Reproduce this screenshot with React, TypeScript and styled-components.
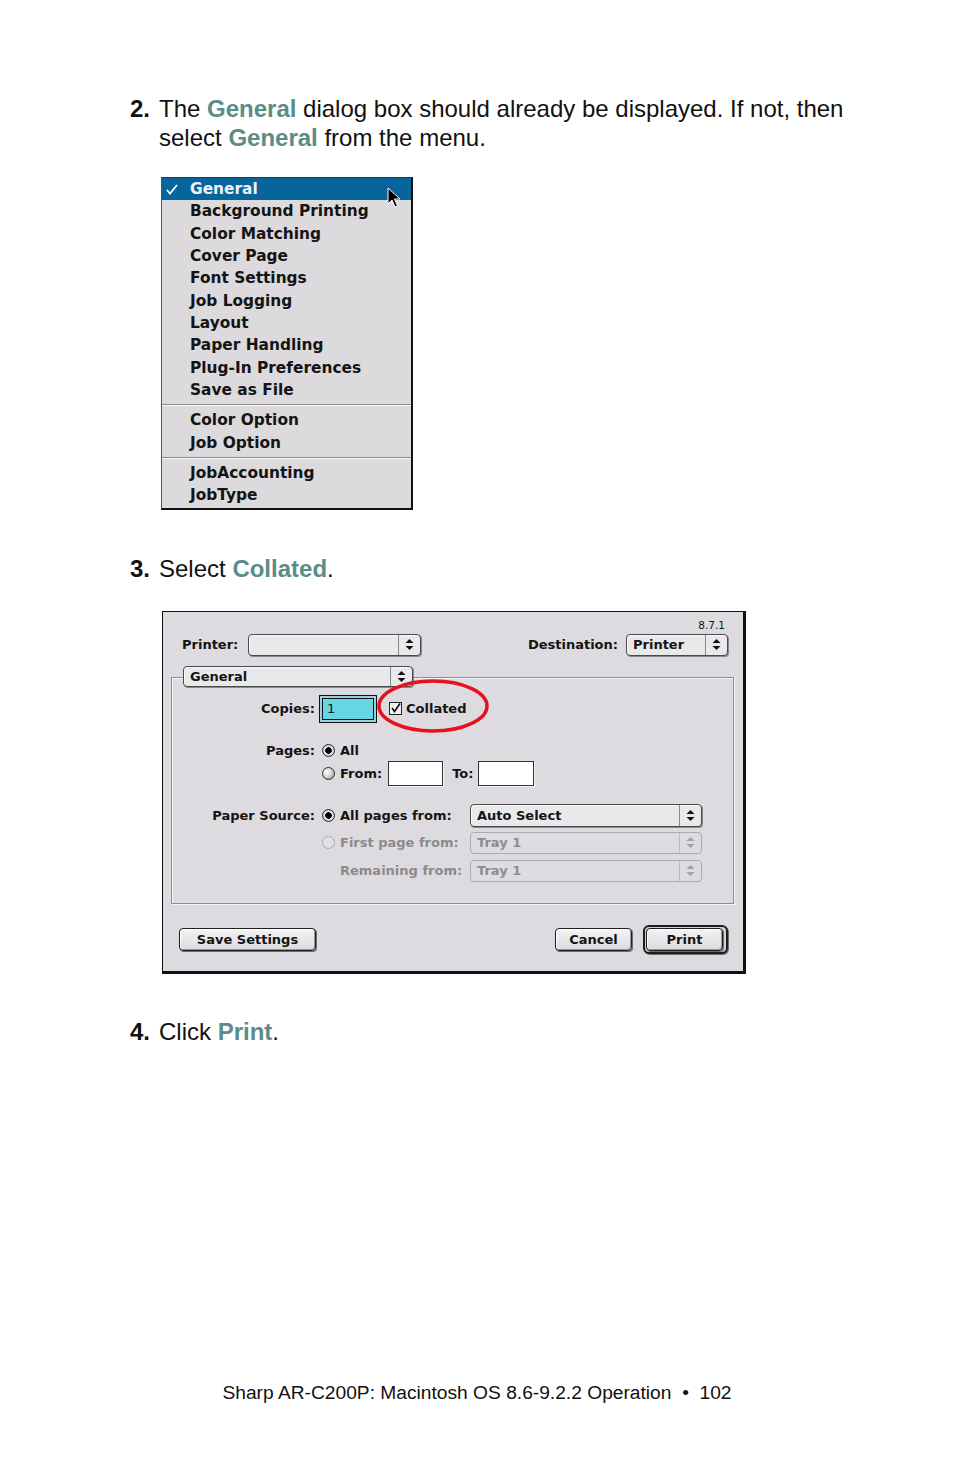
import React from "react";
import styled, { createGlobalStyle } from "styled-components";

const GlobalStyle = createGlobalStyle`
  html, body { margin: 0; padding: 0; background: #ffffff; }
  body { font-family: "Liberation Sans", Arial, sans-serif; color: #000; }
  * { box-sizing: border-box; }
`;

const Page = styled.div`
  width: 954px;
  min-height: 1475px;
  display: flex;
  flex-direction: column;
  padding-top: 94px;
`;

const Step = styled.div<{ $mt?: number }>`
  display: flex;
  margin-left: 130px;
  margin-top: ${(p) => p.$mt ?? 0}px;
  font-size: 24px;
  line-height: 29px;
  color: #111;
`;

const StepNum = styled.span`
  width: 29px;
  flex: none;
  font-weight: bold;
`;

const StepText = styled.span`
  white-space: nowrap;
`;

const Hl = styled.span`
  color: #5b8c88;
  font-weight: bold;
`;

/* ---------- popup menu ---------- */
const Menu = styled.div`
  position: relative;
  width: 252px;
  margin-left: 161px;
  margin-top: 25px;
  background: #dcdadd;
  border-top: 1px solid #333;
  border-left: 1px solid #555;
  border-right: 2px solid #111;
  border-bottom: 2px solid #111;
  padding-bottom: 1px;
  font-family: "DejaVu Sans", Verdana, sans-serif;
  font-weight: bold;
  font-size: 15.4px;
`;

const MenuItem = styled.div<{ $active?: boolean }>`
  position: relative;
  height: 22.33px;
  display: flex;
  align-items: center;
  padding-left: 28px;
  background: ${(p) => (p.$active ? "#08659b" : "transparent")};
  color: ${(p) => (p.$active ? "#eef3f8" : "#141414")};
  white-space: nowrap;
`;

const Check = styled.svg`
  position: absolute;
  left: 4px;
  top: 6px;
`;

const Cursor = styled.svg`
  position: absolute;
  left: 225px;
  top: 9px;
`;

const MenuSep = styled.div`
  height: 8px;
  display: flex;
  align-items: center;
  &::after {
    content: "";
    flex: 1;
    border-top: 1px solid #8a888c;
    border-bottom: 1px solid #f8f8f8;
  }
`;

/* ---------- dialog ---------- */
const Dialog = styled.div`
  position: relative;
  width: 584px;
  margin-left: 162px;
  margin-top: 28px;
  background: #dddbdf;
  border-top: 1px solid #111;
  border-left: 1px solid #111;
  border-right: 3px solid #111;
  border-bottom: 3px solid #111;
  padding: 0 15px 17px 0;
  font-family: "DejaVu Sans", Verdana, sans-serif;
  font-weight: bold;
  font-size: 13px;
  color: #141414;
`;

const Version = styled.div`
  margin-top: 7px;
  height: 12px;
  line-height: 12px;
  text-align: right;
  padding-right: 3px;
  font-weight: normal;
  font-size: 10.5px;
`;

const TopRow = styled.div`
  display: flex;
  align-items: center;
  justify-content: space-between;
  margin-top: 3px;
  padding-left: 19px;
  height: 22px;
`;

const LabelGroup = styled.div<{ $gap: number }>`
  display: flex;
  align-items: center;
  gap: ${(p) => p.$gap}px;
`;

const GroupBox = styled.div`
  position: relative;
  margin: 21px -6px 0 8px;
  border: 1px solid #8d8b90;
  box-shadow: inset 1px 1px 0 #f6f6f6, 1px 1px 0 #f6f6f6;
  padding: 17px 0 21px 0;
`;

const GroupPopup = styled.div`
  position: absolute;
  left: 11px;
  top: -12px;
`;

const FormRow = styled.div<{ $h: number; $mt?: number }>`
  display: grid;
  grid-template-columns: 143px 1fr;
  column-gap: 4px;
  align-items: center;
  height: ${(p) => p.$h}px;
  margin-top: ${(p) => p.$mt ?? 0}px;
`;

const RowLabel = styled.div`
  text-align: right;
  white-space: nowrap;
`;

const Inline = styled.div<{ $pl?: number }>`
  display: flex;
  align-items: center;
  padding-left: ${(p) => p.$pl ?? 0}px;
  white-space: nowrap;
`;

const Option = styled.div<{ $w?: number; $disabled?: boolean; $pl?: number }>`
  display: flex;
  align-items: center;
  gap: 5px;
  flex: none;
  width: ${(p) => (p.$w ? `${p.$w}px` : "auto")};
  padding-left: ${(p) => p.$pl ?? 3}px;
  color: ${(p) => (p.$disabled ? "#8b8a8d" : "#141414")};
  white-space: nowrap;
`;

const Radio = styled.span<{ $on?: boolean; $disabled?: boolean }>`
  width: 13px;
  height: 13px;
  flex: none;
  border-radius: 50%;
  border: 1px solid ${(p) => (p.$disabled ? "#aaa8ac" : "#2a2a2a")};
  background: ${(p) =>
    p.$disabled
      ? "#e2e0e4"
      : p.$on
      ? "radial-gradient(circle, #000 0 3px, #e8e8e8 3.5px, #aaa 100%)"
      : "radial-gradient(circle at 35% 35%, #ffffff 0, #d8d8d8 45%, #8e8e8e 100%)"};
`;

const CheckBox = styled.span`
  width: 13px;
  height: 13px;
  flex: none;
  border: 1px solid #222;
  background: #f2f2f2;
  display: flex;
  align-items: center;
  justify-content: center;
`;

const CheckText = styled.span`
  margin-left: -1px;
`;

const FocusField = styled.div`
  width: 58px;
  height: 28px;
  border: 1px solid #111;
  background: #9bcfe0;
  padding: 2px;
  flex: none;
`;

const FocusInner = styled.div`
  height: 100%;
  border: 1px solid #111;
  background: #66d6e4;
  padding-left: 4px;
  line-height: 20px;
  font-weight: normal;
`;

const TextField = styled.div<{ $w: number; $ml: number }>`
  width: ${(p) => p.$w}px;
  height: 25px;
  margin-left: ${(p) => p.$ml}px;
  border: 1px solid #333;
  background: #fff;
  box-shadow: 1px 1px 0 #f4f4f4;
  flex: none;
`;

const Spacer = styled.span<{ $w: number }>`
  display: inline-block;
  width: ${(p) => p.$w}px;
  flex: none;
`;

const PopupBox = styled.div<{ $w: number; $h: number; $disabled?: boolean }>`
  width: ${(p) => p.$w}px;
  height: ${(p) => p.$h}px;
  display: flex;
  flex: none;
  border: 1px solid ${(p) => (p.$disabled ? "#acaaae" : "#4a4a4a")};
  border-radius: 4px;
  background: ${(p) => (p.$disabled ? "#dedce0" : "#e9e8eb")};
  box-shadow: ${(p) => (p.$disabled ? "none" : "1px 1px 0 #8a898c, inset 1px 1px 0 #fafafa")};
  color: ${(p) => (p.$disabled ? "#8d8c90" : "#141414")};
`;

const PopupLabel = styled.div`
  flex: 1;
  display: flex;
  align-items: center;
  padding-left: 6px;
  white-space: nowrap;
  overflow: hidden;
`;

const PopupArrows = styled.div<{ $disabled?: boolean }>`
  width: 22px;
  flex: none;
  display: flex;
  align-items: center;
  justify-content: center;
  border-left: 1px solid ${(p) => (p.$disabled ? "#bcbabe" : "#8a8a8a")};
`;

const ButtonRow = styled.div`
  display: flex;
  align-items: center;
  justify-content: space-between;
  margin-top: 21px;
  height: 29px;
  padding-left: 16px;
`;

const ButtonGroup = styled.div`
  display: flex;
  align-items: center;
  gap: 11px;
`;

const Button = styled.div<{ $w: number }>`
  width: ${(p) => p.$w}px;
  height: 23px;
  display: flex;
  align-items: center;
  justify-content: center;
  border: 1px solid #1e1e1e;
  border-radius: 4px;
  background: linear-gradient(#f3f3f4, #dcdbde);
  box-shadow: inset -1px -1px 0 #9a999c, inset 1px 1px 0 #ffffff, 1px 1px 0 #6d6c70;
  font-size: 13px;
  white-space: nowrap;
`;

const DefaultRing = styled.div`
  width: 85px;
  height: 29px;
  border: 2px solid #1e1e1e;
  border-radius: 6px;
  padding: 1px;
  display: flex;
  background: #d0cfd2;
  box-shadow: 1px 1px 0 #6d6c70;
`;

const Ellipse = styled.svg`
  position: absolute;
  left: 213px;
  top: 66px;
`;

const Footer = styled.div`
  margin-top: auto;
  padding-bottom: 71px;
  text-align: center;
  font-size: 19.2px;
  line-height: 22px;
  color: #111;
`;

const Arrows: React.FC<{ disabled?: boolean }> = ({ disabled }) => (
  <svg width="9" height="11" viewBox="0 0 9 11">
    <path d="M4.5 0 L8.5 4 L0.5 4 Z M0.5 7 L8.5 7 L4.5 11 Z" fill={disabled ? "#a3a1a5" : "#111"} />
  </svg>
);

const Popup: React.FC<{ w: number; h?: number; label?: string; disabled?: boolean }> = ({
  w,
  h = 22,
  label,
  disabled,
}) => (
  <PopupBox $w={w} $h={h} $disabled={disabled}>
    <PopupLabel>{label}</PopupLabel>
    <PopupArrows $disabled={disabled}>
      <Arrows disabled={disabled} />
    </PopupArrows>
  </PopupBox>
);

const menuMain = [
  "Background Printing",
  "Color Matching",
  "Cover Page",
  "Font Settings",
  "Job Logging",
  "Layout",
  "Paper Handling",
  "Plug-In Preferences",
  "Save as File",
];

export default function App() {
  return (
    <>
      <GlobalStyle />
      <Page>
        <Step>
          <StepNum>2.</StepNum>
          <StepText>
            The <Hl>General</Hl> dialog box should already be displayed. If not, then
            <br />
            select <Hl>General</Hl> from the menu.
          </StepText>
        </Step>

        <Menu>
          <MenuItem $active>
            <Check width="12" height="11" viewBox="0 0 12 11">
              <path d="M1 6 L4 9.5 L11 1" stroke="#ffffff" strokeWidth="1.8" fill="none" />
            </Check>
            General
          </MenuItem>
          {menuMain.map((m) => (
            <MenuItem key={m}>{m}</MenuItem>
          ))}
          <MenuSep />
          <MenuItem>Color Option</MenuItem>
          <MenuItem>Job Option</MenuItem>
          <MenuSep />
          <MenuItem>JobAccounting</MenuItem>
          <MenuItem>JobType</MenuItem>
          <Cursor width="14" height="22" viewBox="0 0 14 22">
            <path
              d="M1 1 L1 17 L5 13 L8 20 L10.5 19 L7.5 12 L13 12 Z"
              fill="#000"
              stroke="#fff"
              strokeWidth="1"
              strokeLinejoin="round"
            />
          </Cursor>
        </Menu>

        <Step $mt={44}>
          <StepNum>3.</StepNum>
          <StepText>
            Select <Hl>Collated</Hl>.
          </StepText>
        </Step>

        <Dialog>
          <Version>8.7.1</Version>
          <TopRow>
            <LabelGroup $gap={10}>
              <span>Printer:</span>
              <Popup w={173} />
            </LabelGroup>
            <LabelGroup $gap={8}>
              <span>Destination:</span>
              <Popup w={102} label="Printer" />
            </LabelGroup>
          </TopRow>

          <GroupBox>
            <GroupPopup>
              <Popup w={230} h={21} label="General" />
            </GroupPopup>

            <FormRow $h={28}>
              <RowLabel>Copies:</RowLabel>
              <Inline>
                <FocusField>
                  <FocusInner>1</FocusInner>
                </FocusField>
                <Spacer $w={12} />
                <Option $pl={0}>
                  <CheckBox>
                    <svg width="11" height="11" viewBox="0 0 11 11">
                      <path d="M2 5 L4.5 8.5 L10 0.5" stroke="#111" strokeWidth="1.6" fill="none" />
                    </svg>
                  </CheckBox>
                  <CheckText>Collated</CheckText>
                </Option>
              </Inline>
            </FormRow>

            <FormRow $h={18} $mt={19}>
              <RowLabel>Pages:</RowLabel>
              <Option>
                <Radio $on />
                All
              </Option>
            </FormRow>

            <FormRow $h={25} $mt={1}>
              <span />
              <Inline>
                <Option>
                  <Radio />
                  From:
                </Option>
                <TextField $w={55} $ml={6} />
                <Spacer $w={9} />
                <span>To:</span>
                <TextField $w={56} $ml={5} />
              </Inline>
            </FormRow>

            <FormRow $h={23} $mt={18}>
              <RowLabel>Paper Source:</RowLabel>
              <Inline>
                <Option $w={151}>
                  <Radio $on />
                  All pages from:
                </Option>
                <Popup w={232} h={23} label="Auto Select" />
              </Inline>
            </FormRow>

            <FormRow $h={22} $mt={5}>
              <span />
              <Inline>
                <Option $w={151} $disabled>
                  <Radio $disabled />
                  First page from:
                </Option>
                <Popup w={232} label="Tray 1" disabled />
              </Inline>
            </FormRow>

            <FormRow $h={22} $mt={6}>
              <span />
              <Inline>
                <Option $w={151} $disabled $pl={21}>
                  Remaining from:
                </Option>
                <Popup w={232} label="Tray 1" disabled />
              </Inline>
            </FormRow>
          </GroupBox>

          <ButtonRow>
            <Button $w={137}>Save Settings</Button>
            <ButtonGroup>
              <Button $w={77}>Cancel</Button>
              <DefaultRing>
                <Button $w={77}>Print</Button>
              </DefaultRing>
            </ButtonGroup>
          </ButtonRow>

          <Ellipse width="114" height="56" viewBox="0 0 114 56">
            <ellipse cx="57" cy="28" rx="54" ry="25" fill="none" stroke="#e5121b" strokeWidth="3.5" />
          </Ellipse>
        </Dialog>

        <Step $mt={43}>
          <StepNum>4.</StepNum>
          <StepText>
            Click <Hl>Print</Hl>.
          </StepText>
        </Step>

        <Footer>Sharp AR-C200P: Macintosh OS 8.6-9.2.2 Operation&nbsp; •&nbsp; 102</Footer>
      </Page>
    </>
  );
}
